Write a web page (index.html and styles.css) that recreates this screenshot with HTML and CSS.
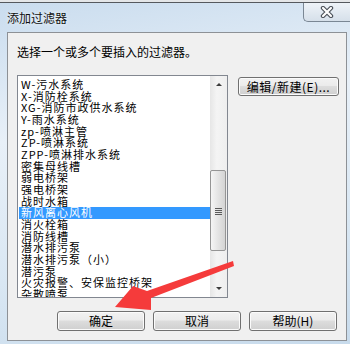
FILE: index.html
```html
<!DOCTYPE html>
<html lang="zh-CN">

<head>
    <meta charset="UTF-8">
    <title>添加过滤器</title>
    <link rel="stylesheet" href="styles.css">
</head>

<body>

    <div class="dialog">
        <div class="topline"></div>

        <div class="titlebar">
            <div class="title">添加过滤器</div>
            <div class="close">
                <svg width="14" height="12" viewBox="0 0 14 12">
                    <path d="M3 2 L11 10 M11 2 L3 10" stroke="#4a5058" stroke-width="4.4" stroke-linecap="round" fill="none" />
                    <path d="M3 2 L11 10 M11 2 L3 10" stroke="#ffffff" stroke-width="2.2" stroke-linecap="round" fill="none" />
                </svg>
            </div>
        </div>

        <div class="client">
            <div class="prompt">选择一个或多个要插入的过滤器。</div>

            <div class="main">
                <div class="listbox">
                    <ul class="items">
                        <li>W-污水系统</li>
                        <li>X-消防栓系统</li>
                        <li>XG-消防市政供水系统</li>
                        <li>Y-雨水系统</li>
                        <li>zp-喷淋主管</li>
                        <li>ZP-喷淋系统</li>
                        <li>ZPP-喷淋排水系统</li>
                        <li>密集母线槽</li>
                        <li>弱电桥架</li>
                        <li>强电桥架</li>
                        <li>战时水箱</li>
                        <li class="selected">新风离心风机</li>
                        <li>消火栓箱</li>
                        <li>消防线槽</li>
                        <li>潜水排污泵</li>
                        <li>潜水排污泵（小）</li>
                        <li>潜污泵</li>
                        <li>火灾报警、安保监控桥架</li>
                        <li>杂散喷泵</li>
                    </ul>
                    <div class="scrollbar">
                        <div class="sb-btn"><span class="arrow-up"></span></div>
                        <div class="sb-track">
                            <div class="thumb"><span class="grip"></span></div>
                        </div>
                        <div class="sb-btn"><span class="arrow-down"></span></div>
                    </div>
                </div>

                <button class="btn edit">编辑/新建(E)...</button>
            </div>

            <div class="actions">
                <button class="btn">确定</button>
                <button class="btn">取消</button>
                <button class="btn">帮助(H)</button>
            </div>
        </div>

        <!-- red annotation arrow drawn over the dialog -->
        <svg class="pointer" width="350" height="344" viewBox="0 0 350 344">
            <polygon points="233,261 147,291 133,286 115,307 151,310 151,298 234,266" fill="#f53b3b" />
        </svg>
    </div>

</body>

</html>
```

FILE: styles.css
```css
body {
    margin: 0;
    font-family: "Noto Sans CJK SC", sans-serif;
    font-size: 12px;
    color: #000;
}

.dialog {
    position: relative;
    width: 350px;
    height: 344px;
    overflow: hidden;
    background: linear-gradient(170deg, #c9dcee 0%, #e8f0f8 35%, #d9e7f3 70%, #c8dbec 100%);
}

.topline {
    height: 2px;
    background-color: #e4e6e8;
    border-bottom: 1px solid #55595e;
}

.titlebar {
    height: 29px;
    display: flex;
    justify-content: space-between;
    align-items: flex-start;
}

.title {
    margin-top: 9px;
    padding-left: 7px;
    line-height: 12px;
    color: #111;
    text-shadow: 0 0 4px #fff;
}

.close {
    width: 47px;
    height: 19px;
    box-sizing: border-box;
    border: 1px solid #7a8794;
    border-top: none;
    border-right: none;
    border-bottom-left-radius: 5px;
    background: linear-gradient(#eef3f8, #d6e0ea);
    display: flex;
    justify-content: center;
    align-items: center;
}

.client {
    margin-left: 7px;
    width: 340px;
    height: 309px;
    box-sizing: border-box;
    border: 1px solid #8d9196;
    background-color: #f0f0f0;
    padding: 13px 9px 0 9px;
}

.prompt {
    height: 12px;
    line-height: 12px;
    white-space: nowrap;
}

.main {
    display: flex;
    gap: 10px;
    margin-top: 17px;
}

.listbox {
    width: 211px;
    height: 223px;
    box-sizing: border-box;
    border: 1px solid #828790;
    background-color: #fff;
    display: flex;
    flex-shrink: 0;
}

.items {
    flex: 1;
    margin: 0;
    padding: 3px 0 0 1px;
    list-style: none;
    overflow: hidden;
}

.items li {
    height: 11.67px;
    line-height: 11.67px;
    padding-left: 2px;
    font-size: 11px;
    letter-spacing: 1px;
    white-space: nowrap;
}

.items .selected {
    background-color: #3399ff;
    color: #fff;
}

.scrollbar {
    width: 17px;
    display: flex;
    flex-direction: column;
    background: linear-gradient(to right, #e6e6e6, #f4f4f4 40%, #eeeeee);
}

.sb-btn {
    height: 17px;
    display: flex;
    justify-content: center;
    align-items: center;
}

.arrow-up {
    border-left: 3px solid transparent;
    border-right: 3px solid transparent;
    border-bottom: 3px solid #3c3c3c;
}

.arrow-down {
    border-left: 3px solid transparent;
    border-right: 3px solid transparent;
    border-top: 3px solid #3c3c3c;
}

.sb-track {
    flex: 1;
}

.thumb {
    margin-top: 77px;
    margin-right: 1px;
    height: 81px;
    box-sizing: border-box;
    border: 1px solid #959595;
    border-radius: 2px;
    background: linear-gradient(to right, #f5f5f5, #e4e4e4 50%, #d4d4d4);
    display: flex;
    justify-content: center;
    align-items: center;
}

.grip {
    width: 7px;
    height: 1px;
    margin-top: -4px;
    background-color: #5a5a5a;
    box-shadow: 0 2px 0 #5a5a5a, 0 4px 0 #5a5a5a, 0 6px 0 #5a5a5a;
}

.btn {
    height: 20px;
    width: 88px;
    padding: 0;
    box-sizing: border-box;
    border: 1px solid #707070;
    border-radius: 3px;
    background: linear-gradient(#f2f2f2 0%, #ebebeb 45%, #dddddd 50%, #cfcfcf 100%);
    box-shadow: inset 0 0 0 1px #fbfbfb;
    font-family: "Noto Sans CJK SC", sans-serif;
    font-size: 12px;
    line-height: 18px;
    color: #000;
}

.edit {
    width: 101px;
    height: 19px;
    margin-top: 2px;
    flex-shrink: 0;
    letter-spacing: 0.5px;
}

.actions {
    display: flex;
    justify-content: flex-end;
    gap: 8px;
    margin-top: 13px;
}

.pointer {
    position: absolute;
    top: 0;
    left: 0;
    pointer-events: none;
}
```
